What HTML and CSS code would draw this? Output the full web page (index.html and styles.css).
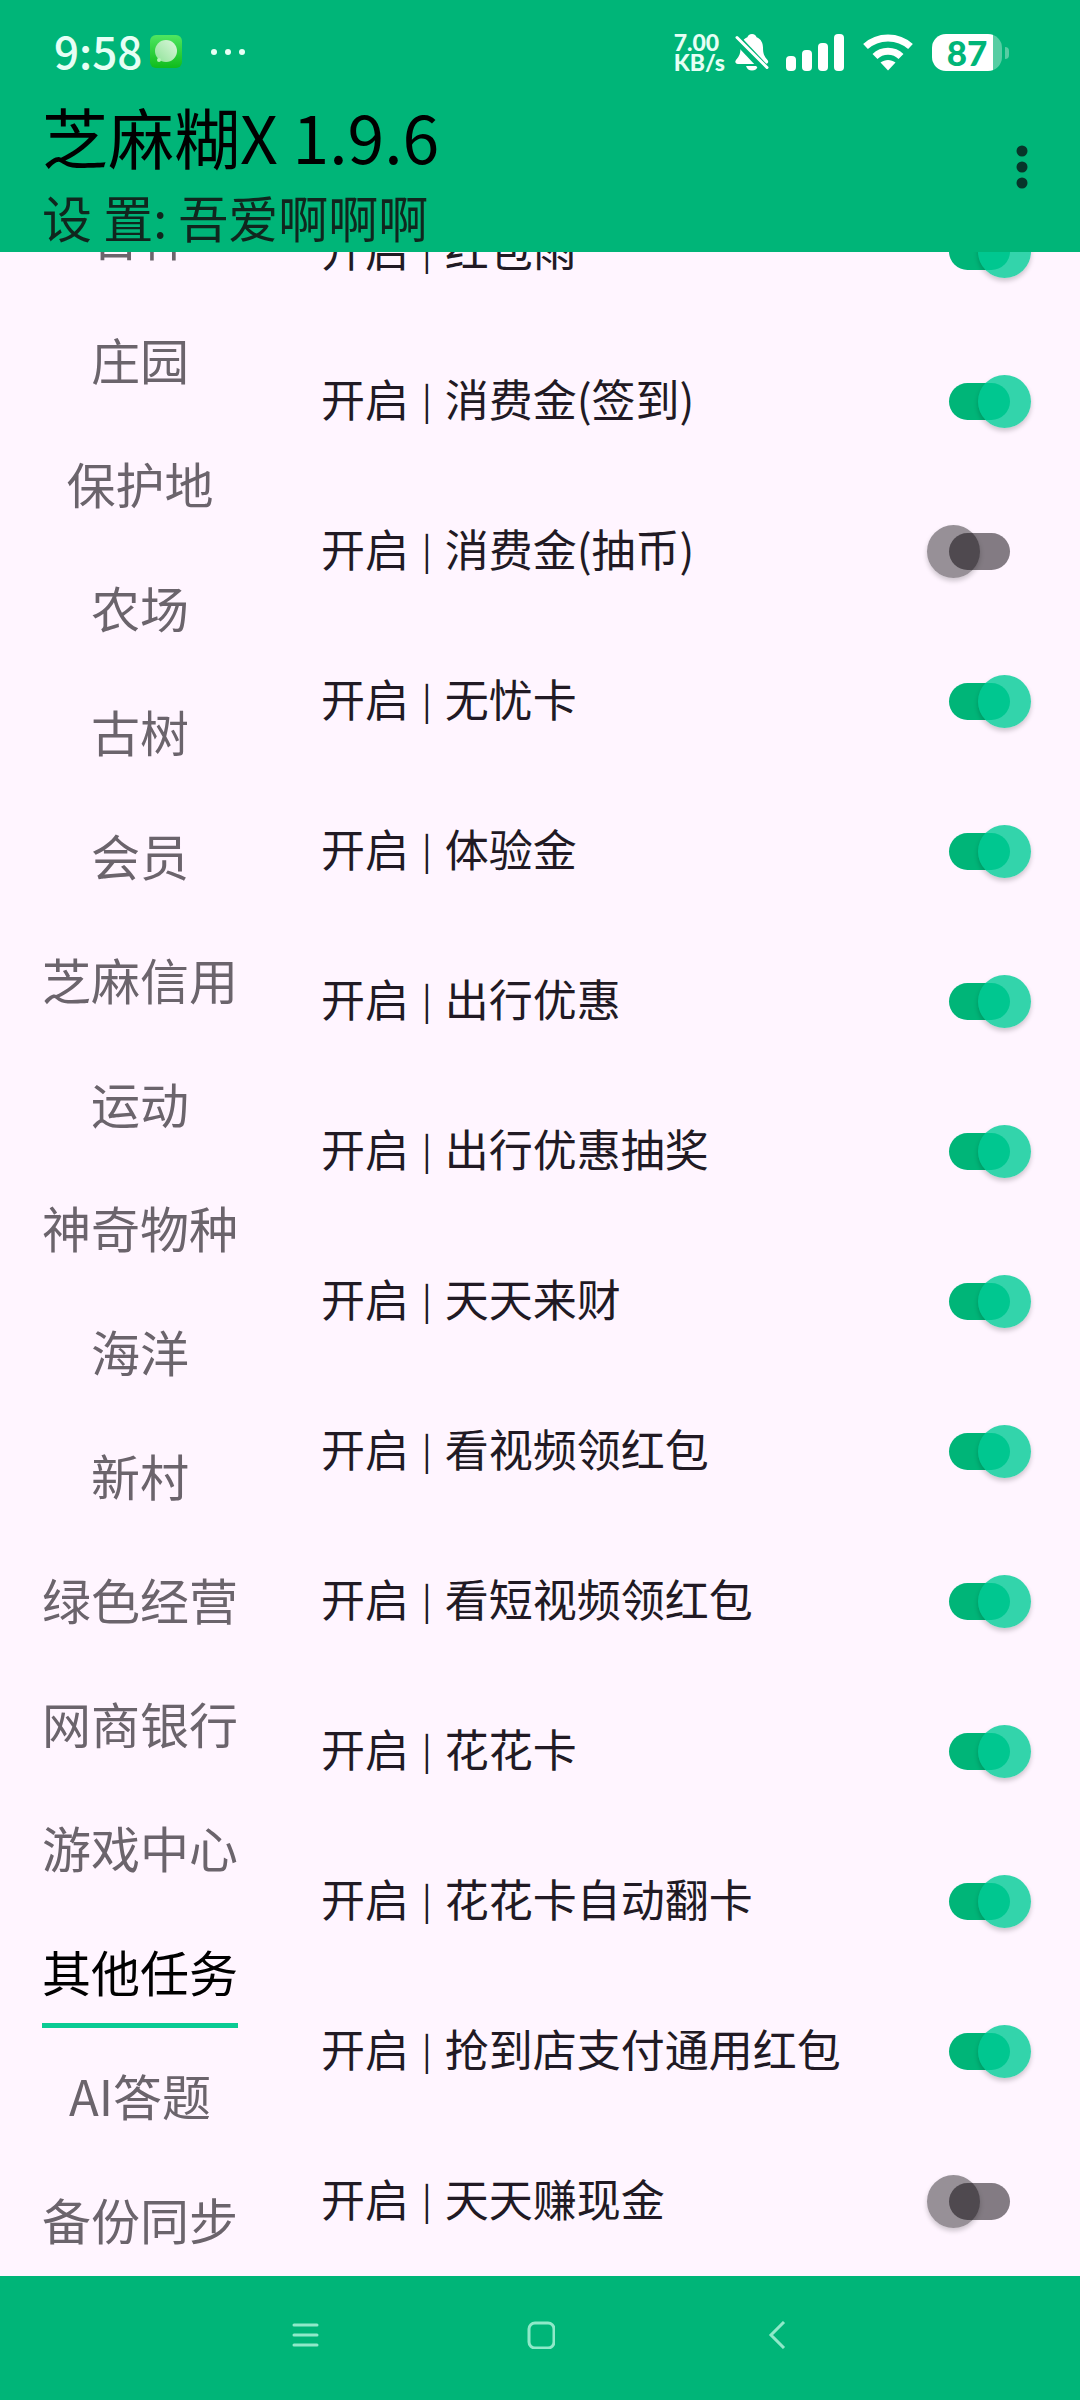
FILE: index.html
```html
<!DOCTYPE html>
<html lang="zh-CN">
<head>
<meta charset="utf-8">
<meta name="viewport" content="width=device-width, initial-scale=1">
<title>芝麻糊X 1.9.6</title>
<link rel="stylesheet" href="styles.css">
</head>
<body>
<header class="app-header">
  <div class="status-bar">
    <div class="status-left">
      <span class="clock">9:58</span>
      <svg class="app-icon" width="32" height="34" viewBox="0 0 32 34" aria-hidden="true">
        <defs>
          <linearGradient id="tile" x1="0" y1="0" x2="0" y2="1"><stop offset="0" stop-color="#4fe661"/><stop offset="1" stop-color="#0fbc1c"/></linearGradient>
          <linearGradient id="bubble" x1="1" y1="0" x2="0" y2="1"><stop offset="0" stop-color="#dcf8dc"/><stop offset="1" stop-color="#8fe298"/></linearGradient>
        </defs>
        <rect width="32" height="33" rx="6" fill="url(#tile)"/>
        <circle cx="16" cy="16" r="11" fill="url(#bubble)"/>
        <circle cx="9" cy="25" r="2" fill="#b5f3b9"/>
      </svg>
      <svg class="more-notices" width="36" height="8" viewBox="0 0 36 8" fill="#e6fff5" aria-hidden="true">
        <circle cx="4" cy="4" r="3"/><circle cx="18" cy="4" r="3"/><circle cx="32" cy="4" r="3"/>
      </svg>
    </div>
    <div class="status-right">
      <span class="net-speed"><span>7.00</span><span>KB/s</span></span>
      <svg class="bell" width="34" height="37" viewBox="0 0 34 37" aria-hidden="true">
        <path d="M17 0c2.500 0 4 1.500 4.600 3.200C26 5 28 9 28 13.500c0 6 1 8.500 4.500 12.500 1.500 2 .5 4-2 4H3c-2.500 0-3.500-2-2-4 3.500-4 4.500-6.500 4.500-12.500C5.500 9 8 5 12.400 3.200 13 1.500 14.500 0 17 0z" fill="#fff"/>
        <path d="M11 32h12c-1 3-3 4.500-6 4.500S12 35 11 32z" fill="#fff"/>
        <path d="M-2 1L32 37" stroke="#00b578" stroke-width="9"/>
        <path d="M0 0h7L4 5z" fill="#00b578"/>
        <path d="M2 3.500L32 33.500" stroke="#fff" stroke-width="3" stroke-linecap="round"/>
      </svg>
      <svg class="signal" width="60" height="37" viewBox="0 0 60 37" fill="#fff" aria-hidden="true">
        <rect x="1" y="22" width="10" height="15" rx="4"/><rect x="17" y="16" width="10" height="21" rx="4"/><rect x="33" y="9" width="10" height="28" rx="4"/><rect x="49" y="0" width="10" height="37" rx="4"/>
      </svg>
      <svg class="wifi" width="50" height="37" viewBox="0 0 50 37" aria-hidden="true">
        <path d="M2.500 12.500C15 1 35 1 47.500 12.500" fill="none" stroke="#fff" stroke-width="7"/>
        <path d="M12 22.500C19 15.500 31 15.500 38 22.500" fill="none" stroke="#fff" stroke-width="7"/>
        <path d="M17.500 28.500C22 25 28 25 32.500 28.500L25 36.500z" fill="#fff"/>
      </svg>
      <span class="battery"><span class="battery-level">87</span></span>
    </div>
  </div>
  <div class="toolbar">
    <div class="titles">
      <h1 class="title">芝麻糊X 1.9.6</h1>
      <p class="subtitle">设 置: 吾爱啊啊啊</p>
    </div>
    <button class="overflow-button" type="button" aria-label="更多选项">
      <svg width="12" height="44" viewBox="0 0 12 44" fill="#07352a" aria-hidden="true"><circle cx="6" cy="6" r="5.500"/><circle cx="6" cy="22" r="5.500"/><circle cx="6" cy="38" r="5.500"/></svg>
    </button>
  </div>
</header>

<main class="content">
  <nav class="tabs" aria-label="分类">
    <button class="tab" type="button">合种</button>
    <button class="tab" type="button">庄园</button>
    <button class="tab" type="button">保护地</button>
    <button class="tab" type="button">农场</button>
    <button class="tab" type="button">古树</button>
    <button class="tab" type="button">会员</button>
    <button class="tab" type="button">芝麻信用</button>
    <button class="tab" type="button">运动</button>
    <button class="tab" type="button">神奇物种</button>
    <button class="tab" type="button">海洋</button>
    <button class="tab" type="button">新村</button>
    <button class="tab" type="button">绿色经营</button>
    <button class="tab" type="button">网商银行</button>
    <button class="tab" type="button">游戏中心</button>
    <button class="tab tab-active" type="button" aria-current="true">其他任务</button>
    <button class="tab" type="button">AI答题</button>
    <button class="tab" type="button">备份同步</button>
  </nav>
  <div class="settings">
    <label class="setting"><span class="name">开启<span class="bar">|</span>红包雨</span><input class="switch" type="checkbox" checked></label>
    <label class="setting"><span class="name">开启<span class="bar">|</span>消费金(签到)</span><input class="switch" type="checkbox" checked></label>
    <label class="setting"><span class="name">开启<span class="bar">|</span>消费金(抽币)</span><input class="switch" type="checkbox"></label>
    <label class="setting"><span class="name">开启<span class="bar">|</span>无忧卡</span><input class="switch" type="checkbox" checked></label>
    <label class="setting"><span class="name">开启<span class="bar">|</span>体验金</span><input class="switch" type="checkbox" checked></label>
    <label class="setting"><span class="name">开启<span class="bar">|</span>出行优惠</span><input class="switch" type="checkbox" checked></label>
    <label class="setting"><span class="name">开启<span class="bar">|</span>出行优惠抽奖</span><input class="switch" type="checkbox" checked></label>
    <label class="setting"><span class="name">开启<span class="bar">|</span>天天来财</span><input class="switch" type="checkbox" checked></label>
    <label class="setting"><span class="name">开启<span class="bar">|</span>看视频领红包</span><input class="switch" type="checkbox" checked></label>
    <label class="setting"><span class="name">开启<span class="bar">|</span>看短视频领红包</span><input class="switch" type="checkbox" checked></label>
    <label class="setting"><span class="name">开启<span class="bar">|</span>花花卡</span><input class="switch" type="checkbox" checked></label>
    <label class="setting"><span class="name">开启<span class="bar">|</span>花花卡自动翻卡</span><input class="switch" type="checkbox" checked></label>
    <label class="setting"><span class="name">开启<span class="bar">|</span>抢到店支付通用红包</span><input class="switch" type="checkbox" checked></label>
    <label class="setting"><span class="name">开启<span class="bar">|</span>天天赚现金</span><input class="switch" type="checkbox"></label>
  </div>
</main>

<footer class="system-nav">
  <button class="nav-button" type="button" aria-label="最近任务">
    <svg width="28" height="28" viewBox="0 0 28 28" fill="none" stroke="#8fe9c9" stroke-width="3" stroke-linecap="round" aria-hidden="true"><path d="M3 4h23M3 14h23M3 24h23"/></svg>
  </button>
  <button class="nav-button" type="button" aria-label="主屏幕">
    <svg width="28" height="28" viewBox="0 0 28 28" fill="none" stroke="#8fe9c9" stroke-width="3" aria-hidden="true"><rect x="2" y="2" width="25" height="25" rx="6"/></svg>
  </button>
  <button class="nav-button" type="button" aria-label="返回">
    <svg width="28" height="28" viewBox="0 0 28 28" fill="none" stroke="#8fe9c9" stroke-width="3" aria-hidden="true"><path d="M21 1L8 14l13 13"/></svg>
  </button>
</footer>
</body>
</html>
```

FILE: styles.css
```css
* {
  box-sizing: border-box;
}

:root {
  --green: #00b578;
  --surface: #fff5ff;
  --text: #211a24;
  --muted: #6b646c;
}

body {
  display: flex;
  flex-direction: column;
  height: 100vh;
  margin: 0;
  background: var(--surface);
  color: var(--text);
  font-family: "Noto Sans CJK SC", sans-serif;
}

button {
  margin: 0;
  padding: 0;
  border: 0;
  background: none;
  color: inherit;
  font: inherit;
}

svg {
  display: block;
}

/* Header */

.app-header {
  flex: none;
  background: var(--green);
}

.status-bar {
  display: flex;
  justify-content: space-between;
  align-items: center;
  height: 84px;
  padding: 20px 78px 0 54px;
  color: #fff;
}

.status-left,
.status-right {
  display: flex;
  align-items: center;
}

.clock {
  color: #e6fff5;
  font-size: 44px;
  font-weight: 500;
  line-height: 64px;
  padding-bottom: 4px;
}

.app-icon {
  margin-left: 8px;
}

.more-notices {
  margin-left: 28px;
}

.net-speed {
  display: flex;
  flex-direction: column;
  color: #e6fff5;
  font-family: Lato, sans-serif;
  font-size: 23px;
  font-weight: 900;
  line-height: 20px;
}

.bell {
  margin-left: 10px;
}

.signal {
  margin-left: 16px;
}

.wifi {
  margin-left: 18px;
}

.battery {
  position: relative;
  width: 70px;
  height: 37px;
  margin-left: 19px;
  border-radius: 14px;
  background: linear-gradient(to right, #fff 61px, #57cda3 61px);
}

.battery::after {
  content: "";
  position: absolute;
  top: 13px;
  right: -7px;
  width: 4px;
  height: 12px;
  border-radius: 0 4px 4px 0;
  background: #57cda3;
}

.battery-level {
  display: block;
  color: var(--green);
  font-family: Lato, sans-serif;
  font-size: 35px;
  font-weight: 900;
  line-height: 37px;
  text-align: center;
}

.toolbar {
  display: flex;
  justify-content: space-between;
  align-items: center;
  padding: 6px 52px 0 42px;
}

.title {
  margin: 0;
  color: #000;
  font-size: 66px;
  font-weight: 400;
  line-height: 90px;
}

.subtitle {
  margin: 0;
  color: #10261e;
  font-size: 50px;
  line-height: 72px;
}

.overflow-button {
  padding-bottom: 8px;
}

/* Category tabs and settings list, both scrolled to their end */

.content {
  display: flex;
  flex: 1;
  min-height: 0;
}

.tabs {
  display: flex;
  flex: none;
  flex-direction: column;
  justify-content: flex-end;
  gap: 16px;
  width: 280px;
  padding: 0 42px;
  overflow: hidden;
}

.tab {
  flex: none;
  height: 108px;
  padding-bottom: 6px;
  color: var(--muted);
  font-size: 49px;
  line-height: 72px;
  white-space: nowrap;
}

.tab-active {
  padding-top: 5px;
  border-bottom: 5px solid #0acb94;
  color: #000;
}

.settings {
  display: flex;
  flex: 1;
  flex-direction: column;
  justify-content: flex-end;
  overflow: hidden;
}

.setting {
  display: flex;
  flex: none;
  justify-content: space-between;
  align-items: center;
  height: 150px;
  padding: 0 49px 0 41px;
  font-size: 44px;
  line-height: 64px;
}

.name {
  display: flex;
  align-items: center;
  gap: 13px;
  padding-bottom: 6px;
}

.bar {
  font-size: 36px;
}

/* Track and thumb share one grid cell */

.switch {
  display: grid;
  align-items: center;
  width: 104px;
  height: 53px;
  margin: 0;
  appearance: none;
}

.switch::before,
.switch::after {
  content: "";
  grid-area: 1 / 1;
}

.switch::before {
  justify-self: center;
  width: 61px;
  height: 37px;
  border-radius: 19px;
  background: #837b83;
}

.switch::after {
  justify-self: start;
  width: 53px;
  height: 53px;
  border-radius: 50%;
  background: rgba(8, 5, 8, 0.42);
  box-shadow: 0 3px 5px rgba(0, 0, 0, 0.2);
}

.switch:checked::before {
  background: var(--green);
}

.switch:checked::after {
  justify-self: end;
  background: rgba(0, 204, 150, 0.8);
}

/* System navigation */

.system-nav {
  display: flex;
  flex: none;
  justify-content: center;
  height: 124px;
  padding: 0 0 6px 2px;
  background: var(--green);
}

.nav-button {
  display: flex;
  justify-content: center;
  align-items: center;
  width: 236px;
}
```
